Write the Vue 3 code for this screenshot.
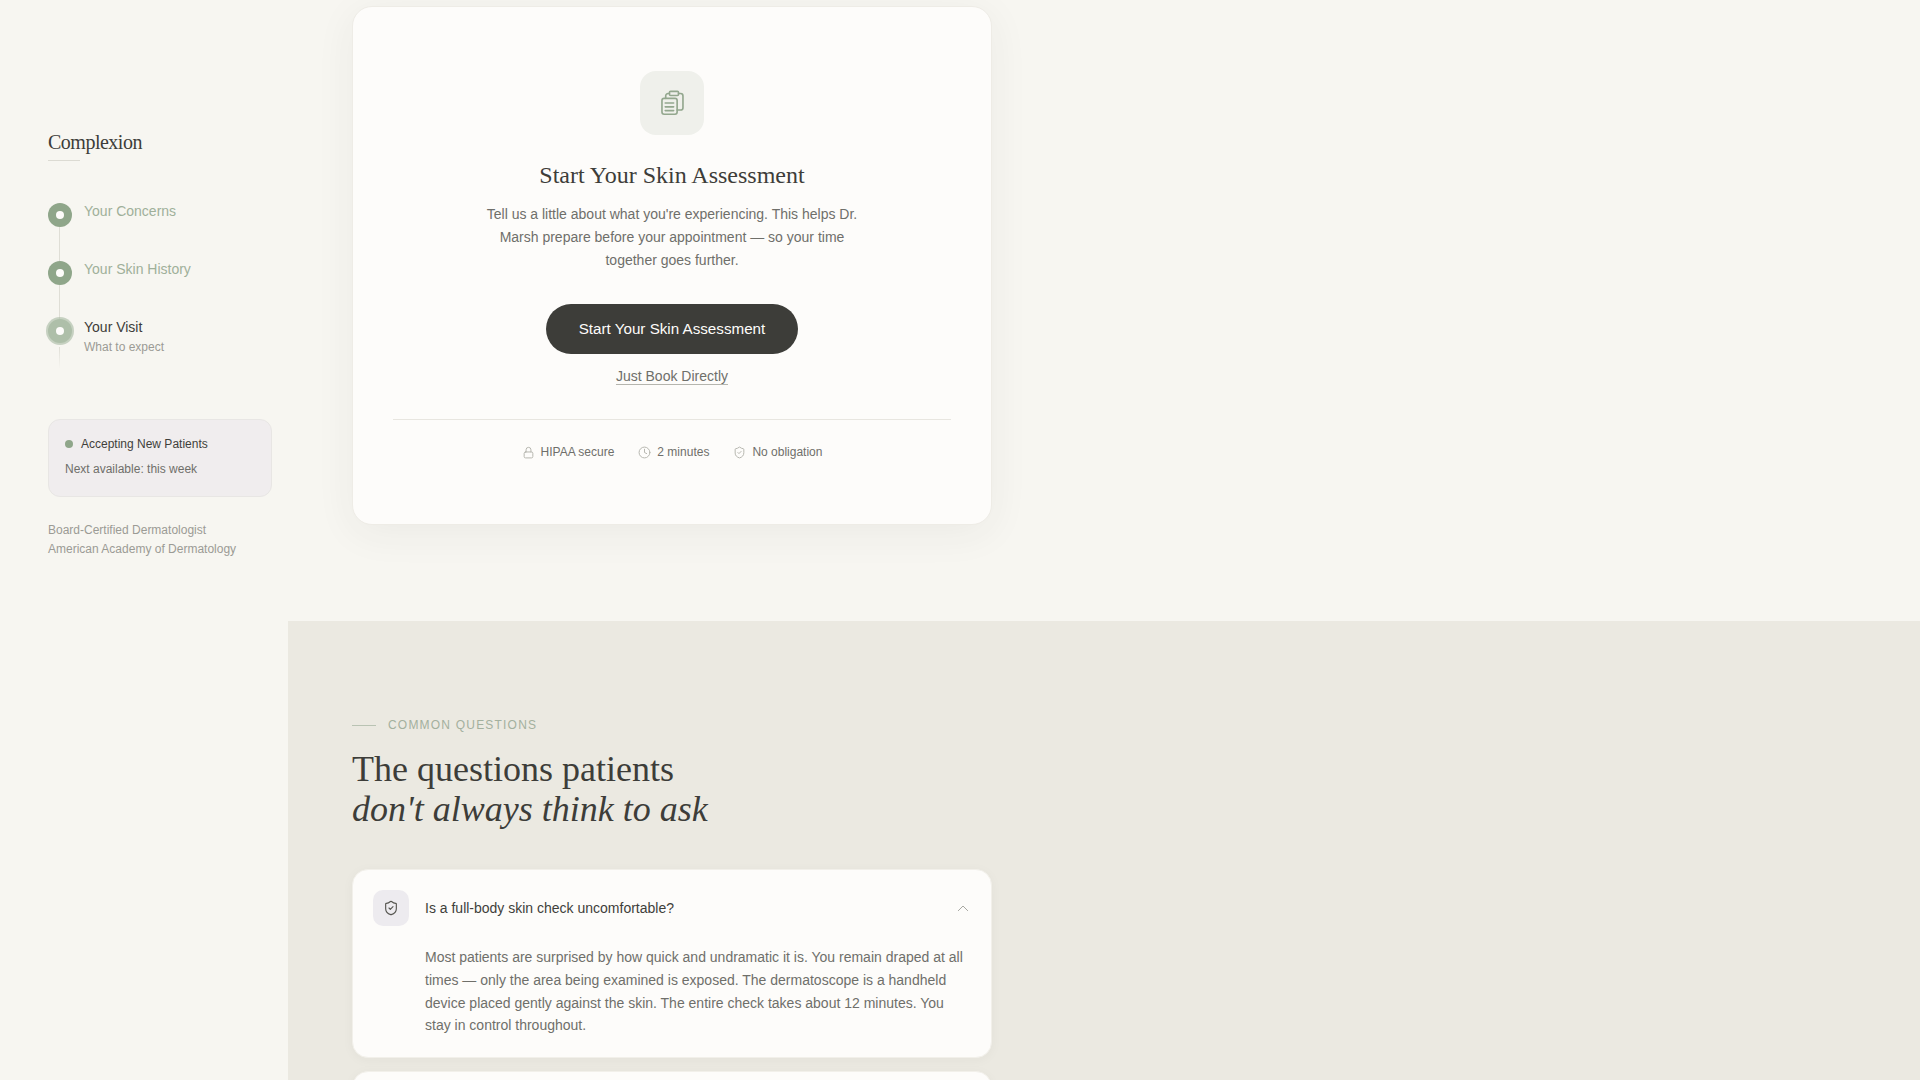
<script setup>
const steps = [
  { label: 'Your Concerns', done: true },
  { label: 'Your Skin History', done: true },
  { label: 'Your Visit', sub: 'What to expect', active: true }
]
</script>

<template>
  <div class="page">
    <aside class="sidebar">
      <div class="logo">Complexion</div>
      <div class="rule"></div>
      <ol class="steps">
        <li v-for="s in steps" :key="s.label" class="step" :class="{ active: s.active }">
          <span class="dot"><span class="pip"></span></span>
          <div class="step-text">
            <div class="step-label">{{ s.label }}</div>
            <div v-if="s.sub" class="step-sub">{{ s.sub }}</div>
          </div>
        </li>
      </ol>
      <div class="status">
        <div class="status-top"><span class="status-dot"></span>Accepting New Patients</div>
        <div class="status-next">Next available: this week</div>
      </div>
      <div class="creds">
        <div>Board-Certified Dermatologist</div>
        <div>American Academy of Dermatology</div>
      </div>
    </aside>

    <main class="main">
      <section class="intro">
        <div class="card">
          <div class="icon-box">
            <svg width="28" height="28" viewBox="0 -1 24 24" fill="none" stroke="#93a78e" stroke-width="1.4" stroke-linecap="round" stroke-linejoin="round">
              <rect x="9.8" y="1" width="7.8" height="3.6" rx="1" />
              <path d="M9.800 2.900H8.600a2 2 0 0 0-2 2V7" />
              <path d="M17.600 2.900h1.800a2 2 0 0 1 2 2V15a2 2 0 0 1-2 2h-3" />
              <rect x="3.4" y="7" width="13" height="13.6" rx="1.8" />
              <path d="M6.200 11h7.200M6.200 14.300h7.200M6.200 17.500h7.200" />
            </svg>
          </div>
          <h2 class="card-title">Start Your Skin Assessment</h2>
          <p class="card-text">Tell us a little about what you're experiencing. This helps Dr. Marsh prepare before your appointment — so your time together goes further.</p>
          <button class="cta">Start Your Skin Assessment</button>
          <a class="direct">Just Book Directly</a>
          <div class="meta">
            <span class="meta-item">
              <svg width="13" height="13" viewBox="0 0 24 24" fill="none" stroke="#b5b5ae" stroke-width="1.8" stroke-linecap="round" stroke-linejoin="round"><rect x="4" y="11" width="16" height="11" rx="2.5" /><path d="M7.500 11V7a4.500 4.500 0 0 1 9 0v4" /></svg>
              HIPAA secure
            </span>
            <span class="meta-item">
              <svg width="13" height="13" viewBox="0 0 24 24" fill="none" stroke="#b5b5ae" stroke-width="1.8" stroke-linecap="round" stroke-linejoin="round"><circle cx="12" cy="12" r="10" /><path d="M12 6v6l4 2" /></svg>
              2 minutes
            </span>
            <span class="meta-item">
              <svg width="13" height="13" viewBox="0 0 24 24" fill="none" stroke="#b5b5ae" stroke-width="1.8" stroke-linecap="round" stroke-linejoin="round"><path d="M20 13c0 5-3.500 7.500-7.660 8.950a1 1 0 0 1-.67-.01C7.500 20.500 4 18 4 13V6a1 1 0 0 1 1-1c2 0 4.500-1.200 6.240-2.720a1.170 1.170 0 0 1 1.520 0C14.510 3.810 17 5 19 5a1 1 0 0 1 1 1z" /><path d="m9 12 2 2 4-4" /></svg>
              No obligation
            </span>
          </div>
        </div>
      </section>

      <section class="faq">
        <div class="eyebrow"><span class="eyebrow-line"></span>COMMON QUESTIONS</div>
        <h2 class="faq-title">The questions patients<br /><em>don't always think to ask</em></h2>
        <div class="faq-item">
          <div class="faq-head">
            <span class="faq-icon">
              <svg width="16" height="16" viewBox="0 0 24 24" fill="none" stroke="#55554f" stroke-width="1.7" stroke-linecap="round" stroke-linejoin="round"><path d="M20 13c0 5-3.500 7.500-7.660 8.950a1 1 0 0 1-.67-.01C7.500 20.500 4 18 4 13V6a1 1 0 0 1 1-1c2 0 4.500-1.200 6.240-2.720a1.170 1.170 0 0 1 1.520 0C14.510 3.810 17 5 19 5a1 1 0 0 1 1 1z" /><path d="m9 12 2 2 4-4" /></svg>
            </span>
            <span class="faq-q">Is a full-body skin check uncomfortable?</span>
            <svg class="chev" width="16" height="16" viewBox="0 0 24 24" fill="none" stroke="#a8a8a2" stroke-width="1.5" stroke-linecap="round" stroke-linejoin="round"><path d="m5 16 7-7 7 7" /></svg>
          </div>
          <p class="faq-a">Most patients are surprised by how quick and undramatic it is. You remain draped at all times — only the area being examined is exposed. The dermatoscope is a handheld device placed gently against the skin. The entire check takes about 12 minutes. You stay in control throughout.</p>
        </div>
        <div class="faq-item next"></div>
      </section>
    </main>
  </div>
</template>

<style>
html, body { margin: 0; height: 100%; overflow: hidden; background: #f7f6f1; }
</style>

<style scoped>
.page {
  display: flex;
  width: 1920px;
  height: 1080px;
  overflow: hidden;
  background: #f7f6f1;
  font-family: "Liberation Sans", Arial, sans-serif;
  color: #3d3d39;
}
.sidebar {
  width: 288px;
  flex: none;
  box-sizing: border-box;
  padding: 130px 16px 0 48px;
}
.logo {
  font-family: "Liberation Serif", serif;
  font-size: 20px;
  line-height: 24px;
  letter-spacing: -0.5px;
  color: #3d3d39;
}
.rule { width: 32px; height: 1px; margin-top: 6px; background: #dcdbd3; }
.steps { list-style: none; margin: 42px 0 0; padding: 0; }
.step { display: flex; gap: 12px; position: relative; height: 58px; }
.step::after {
  content: "";
  position: absolute;
  left: 11px;
  top: 24px;
  width: 1px;
  height: 34px;
  background: #dfded6;
}
.step.active::after {
  top: 28px;
  height: 22px;
  background: linear-gradient(#dfded6, rgba(223, 222, 214, 0));
}
.dot {
  width: 24px; height: 24px; flex: none; border-radius: 50%;
  background: #8fa68a;
  display: flex; align-items: center; justify-content: center;
}
.pip { width: 8px; height: 8px; border-radius: 50%; background: #fdfcfa; }
.step.active .dot { background: #aebfa9; box-shadow: 0 0 0 2px #aebfa9aa; }
.step-label { font-size: 14px; line-height: 18px; margin-top: -1px; color: #9fb09a; }
.step.active .step-label { color: #3d3d39; }
.step-sub { font-size: 12px; line-height: 16px; margin-top: 3px; color: #9b9b95; }
.status {
  margin-top: 42px;
  box-sizing: border-box;
  width: 224px;
  height: 78px;
  padding: 16px 16px 0;
  background: #f0edee;
  border: 1px solid #e8e6e4;
  border-radius: 12px;
}
.status-top { display: flex; align-items: center; gap: 8px; font-size: 12px; line-height: 16px; color: #3f3f3b; }
.status-dot { width: 8px; height: 8px; border-radius: 50%; background: #8fa68a; }
.status-next { font-size: 12px; line-height: 16px; margin-top: 9px; color: #6f6f6a; }
.creds { margin-top: 24px; font-size: 12px; line-height: 19px; color: #9b9b95; }
.main { flex: 1; min-width: 0; }
.intro { height: 621px; box-sizing: border-box; padding: 6px 0 0 64px; }
.card {
  width: 640px;
  height: 519px;
  box-sizing: border-box;
  padding: 64px 40px 0;
  background: #fdfcfa;
  border: 1px solid #eeece6;
  border-radius: 20px;
  box-shadow: 0 8px 40px rgba(58, 58, 54, 0.06);
  display: flex;
  flex-direction: column;
  align-items: center;
}
.icon-box {
  width: 64px; height: 64px; border-radius: 16px; background: #eff0eb;
  display: flex; align-items: center; justify-content: center; flex: none;
}
.card-title {
  margin: 24px 0 0;
  font-family: "Liberation Serif", serif;
  font-weight: 400;
  font-size: 24px;
  line-height: 33px;
  color: #3d3d39;
}
.card-text {
  margin: 11px 0 0;
  width: 384px;
  text-align: center;
  font-size: 14px;
  line-height: 23px;
  color: #6f6f6a;
}
.cta {
  margin-top: 32px;
  width: 252px;
  height: 50px;
  padding: 0 0 2px;
  border: none;
  border-radius: 25px;
  background: #3d3d39;
  color: #fdfcfa;
  font-family: inherit;
  font-size: 15.2px;
}
.direct {
  margin-top: 14px;
  font-size: 14px;
  line-height: 17px;
  color: #6f6f6a;
  text-decoration: underline;
  text-underline-offset: 3px;
  text-decoration-color: #b5b5ae;
}
.meta {
  margin-top: 34px;
  align-self: stretch;
  border-top: 1px solid #e8e6e0;
  padding-top: 24px;
  display: flex;
  justify-content: center;
  gap: 24px;
  font-size: 12px;
  line-height: 16px;
  color: #6f6f6a;
}
.meta-item { display: flex; align-items: center; gap: 6px; }
.faq {
  height: 459px;
  box-sizing: border-box;
  padding: 96px 64px 0;
  background: #ebe9e1;
}
.eyebrow {
  display: flex;
  align-items: center;
  gap: 12px;
  font-size: 12px;
  line-height: 16px;
  letter-spacing: 1.2px;
  color: #a3b09e;
}
.eyebrow-line { width: 24px; height: 1px; background: #b9c3b3; }
.faq-title {
  margin: 16px 0 0;
  font-family: "Liberation Serif", serif;
  font-weight: 400;
  font-size: 36px;
  line-height: 40px;
  color: #3d3d39;
}
.faq-title em { font-style: italic; }
.faq-item {
  width: 640px;
  box-sizing: border-box;
  margin-top: 40px;
  background: #fdfcfa;
  border: 1px solid #f2f0ea;
  border-radius: 16px;
  box-shadow: 0 2px 12px rgba(58, 58, 54, 0.04);
}
.faq-item.next { margin-top: 13px; height: 60px; }
.faq-head { display: flex; align-items: center; gap: 16px; padding: 20px; }
.faq-icon {
  width: 36px; height: 36px; border-radius: 10px; background: #edebef;
  display: flex; align-items: center; justify-content: center; flex: none;
}
.faq-q { flex: 1; font-size: 14px; color: #3f3f3b; }
.chev { flex: none; }
.faq-a {
  margin: 0;
  padding: 0 20px 20px 72px;
  font-size: 14px;
  line-height: 22.75px;
  color: #6f6f6a;
}
</style>
